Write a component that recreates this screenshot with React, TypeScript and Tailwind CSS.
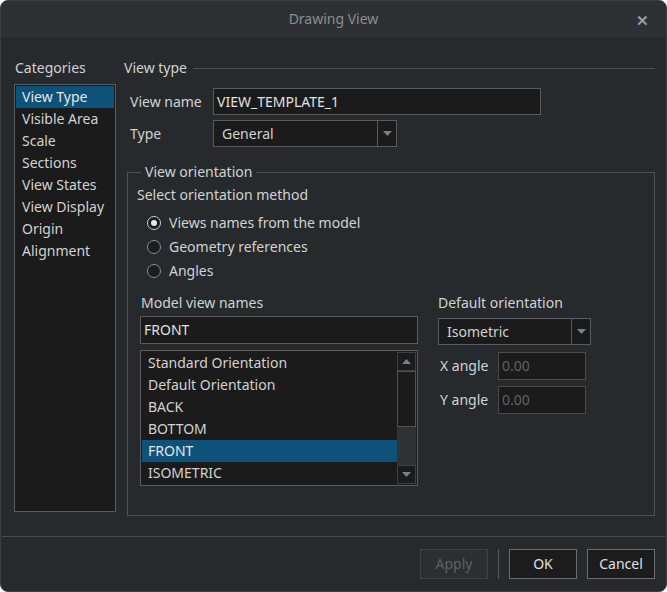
import React from "react";

const Arrow = ({ up = false }: { up?: boolean }) => (
  <svg width="9" height="5" viewBox="0 0 9 5" className={up ? "rotate-180" : ""}>
    <path d="M0 0 H9 L4.5 5 Z" fill="#7d8184" />
  </svg>
);

const Radio = ({ checked = false }: { checked?: boolean }) => (
  <span
    className={
      "w-[14px] h-[14px] rounded-full border flex items-center justify-center bg-[#1c1c1c] " +
      (checked ? "border-[#cfcfcf]" : "border-[#8c8f92]")
    }
  >
    {checked && <span className="w-[6px] h-[6px] rounded-full bg-[#e8e8e8]" />}
  </span>
);

export default function App() {
  const cats = ["View Type", "Visible Area", "Scale", "Sections", "View States", "View Display", "Origin", "Alignment"];
  const views = ["Standard Orientation", "Default Orientation", "BACK", "BOTTOM", "FRONT", "ISOMETRIC"];
  return (
    <div
      className="w-[667px] h-[592px] bg-[#262a2d] text-[#d2d2d2] text-[14px] leading-[20px] rounded-[8px] border border-[#3b3f42] overflow-hidden flex flex-col"
      style={{ fontFamily: '"Noto Sans", "Open Sans", sans-serif' }}
    >
      {/* title bar */}
      <div className="h-[36px] shrink-0 bg-[#2d3134] flex items-center justify-center relative">
        <span className="text-[14px] text-[#8b8e91]">Drawing View</span>
        <span className="absolute right-[17px] top-[9px] text-[15px] font-bold text-[#9a9c9e]">✕</span>
      </div>

      {/* body */}
      <div className="flex-1 flex pt-[21px] pl-[13px] pr-[11px]">
        {/* categories */}
        <div className="w-[102px] flex flex-col">
          <div className="h-[20px] pl-[1px]">Categories</div>
          <div className="mt-[6px] h-[428px] bg-[#1b1b1b] border border-[#595c5f] pt-[1px] px-[1px]">
            {cats.map((c, i) => (
              <div key={c} className={"h-[22px] leading-[22px] pl-[6px] " + (i === 0 ? "bg-[#0d5279] text-[#e6e6e6]" : "")}>
                {c}
              </div>
            ))}
          </div>
        </div>

        {/* main */}
        <div className="flex-1 ml-[8px] flex flex-col">
          <div className="h-[20px] flex items-center">
            <span>View type</span>
            <span className="flex-1 h-px bg-[#4e5255] ml-[6px]" />
          </div>

          <div className="mt-[10px] flex items-center pl-[6px]">
            <span className="w-[83px]">View name</span>
            <div className="w-[328px] h-[27px] bg-[#1b1b1b] border border-[#595c5f] flex items-center pl-[3px] text-[#e0e0e0]">
              VIEW_TEMPLATE_1
            </div>
          </div>

          <div className="mt-[5px] flex items-center pl-[6px]">
            <span className="w-[83px]">Type</span>
            <div className="w-[184px] h-[27px] bg-[#1b1b1b] border border-[#595c5f] flex items-center">
              <span className="flex-1 pl-[8px]">General</span>
              <span className="w-[19px] h-full border-l border-[#595c5f] flex items-center justify-center">
                <Arrow />
              </span>
            </div>
          </div>

          <fieldset className="mt-[15px] ml-[3px] h-[354px] border border-[#4e5255] px-[12px]">
            <legend className="ml-[1px] px-[4px] leading-[20px]">View orientation</legend>
            <div className="mt-[3px] -ml-[3px] h-[20px]">Select orientation method</div>
            <div className="mt-[6px] flex flex-col">
              {["Views names from the model", "Geometry references", "Angles"].map((r, i) => (
                <div key={r} className="h-[24px] flex items-center pl-[7px] gap-[8px]">
                  <Radio checked={i === 0} />
                  <span>{r}</span>
                </div>
              ))}
            </div>

            <div className="mt-[10px] flex">
              <div className="w-[278px] flex flex-col">
                <div className="h-[20px] pl-[1px]">Model view names</div>
                <div className="mt-[3px] h-[28px] bg-[#1b1b1b] border border-[#595c5f] flex items-center pl-[3px] text-[#e0e0e0]">
                  FRONT
                </div>
                <div className="mt-[6px] h-[136px] bg-[#1b1b1b] border border-[#595c5f] flex p-[1px]">
                  <div className="flex-1 flex flex-col">
                    {views.map((v) => (
                      <div
                        key={v}
                        className={"h-[22px] leading-[22px] pl-[6px] " + (v === "FRONT" ? "bg-[#0d5279] text-[#e6e6e6]" : "")}
                      >
                        {v}
                      </div>
                    ))}
                  </div>
                  <div className="w-[19px] flex flex-col bg-[#2f3336]">
                    <div className="h-[19px] bg-[#1b1b1b] border border-[#3d4144] flex items-center justify-center">
                      <Arrow up />
                    </div>
                    <div className="h-[56px] bg-[#1b1b1b] border border-[#4e5255]" />
                    <div className="flex-1" />
                    <div className="h-[19px] bg-[#1b1b1b] border border-[#3d4144] flex items-center justify-center">
                      <Arrow />
                    </div>
                  </div>
                </div>
              </div>

              <div className="ml-[20px] flex flex-col">
                <div className="h-[20px]">Default orientation</div>
                <div className="mt-[5px] w-[153px] h-[27px] bg-[#1b1b1b] border border-[#595c5f] flex items-center">
                  <span className="flex-1 pl-[8px]">Isometric</span>
                  <span className="w-[19px] h-full border-l border-[#595c5f] flex items-center justify-center">
                    <Arrow />
                  </span>
                </div>
                <div className="mt-[7px] flex items-center">
                  <span className="w-[60px] pl-[2px]">X angle</span>
                  <div className="w-[88px] h-[28px] bg-[#1b1b1b] border border-[#474a4d] flex items-center pl-[3px] text-[#5e6265]">
                    0.00
                  </div>
                </div>
                <div className="mt-[6px] flex items-center">
                  <span className="w-[60px] pl-[2px]">Y angle</span>
                  <div className="w-[88px] h-[28px] bg-[#1b1b1b] border border-[#474a4d] flex items-center pl-[3px] text-[#5e6265]">
                    0.00
                  </div>
                </div>
              </div>
            </div>
          </fieldset>
        </div>
      </div>

      {/* footer */}
      <div className="h-px bg-[#4a4e51] mx-[1px]" />
      <div className="h-[54px] shrink-0 flex items-start justify-end pt-[12px] pr-[11px]">
        <button className="w-[68px] h-[30px] bg-[#2b2f32] border border-[#3e4245] text-[#5d6164] text-[14px]">Apply</button>
        <span className="w-px h-[30px] bg-[#55595c] mx-[10px]" />
        <button className="w-[68px] h-[30px] bg-[#1c1c1c] border border-[#6a6d70] text-[#e0e0e0] text-[14px]">OK</button>
        <button className="ml-[10px] w-[68px] h-[30px] bg-[#1c1c1c] border border-[#6a6d70] text-[#e0e0e0] text-[14px]">Cancel</button>
      </div>
    </div>
  );
}
